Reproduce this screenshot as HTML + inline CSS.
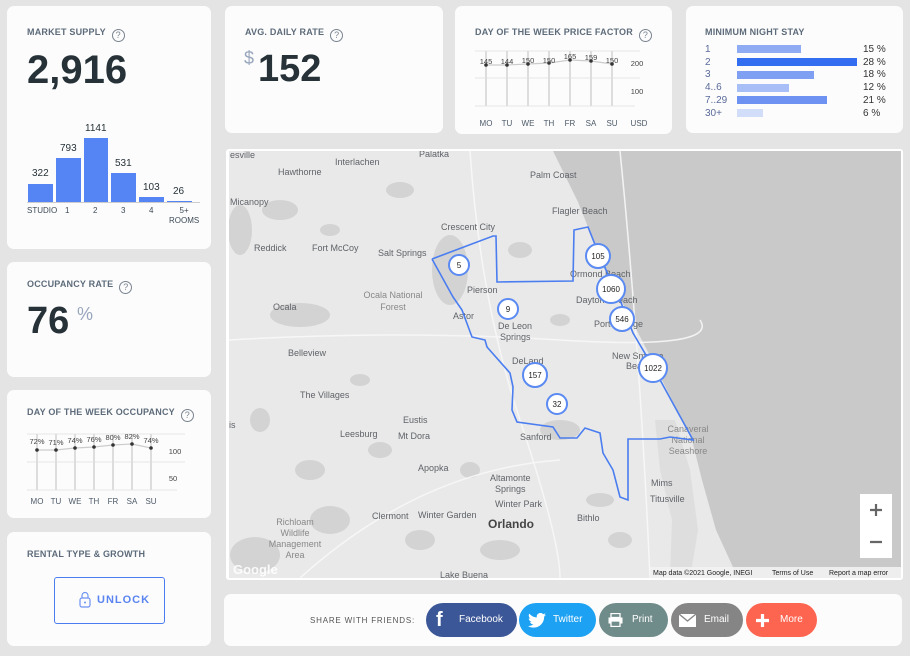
<!DOCTYPE html>
<html><head><meta charset="utf-8"><style>
*{margin:0;padding:0;box-sizing:border-box}
body{width:910px;height:656px;background:#e4e4e4;font-family:"Liberation Sans",sans-serif;position:relative;overflow:hidden;color:#263238}
.card{position:absolute;background:#fcfcfc;border-radius:7px}
.t{position:absolute;font-size:9px;font-weight:bold;color:#5d6b7a;letter-spacing:.2px;white-space:nowrap}
.q{display:inline-block;width:13px;height:13px;border:1.3px solid #7a8490;border-radius:50%;font-size:9px;text-align:center;line-height:11px;color:#7a8490;margin-left:6px;vertical-align:-3px;font-weight:normal}
.ab{position:absolute;white-space:nowrap}
.bar{position:absolute;background:#5585f4}
.btn{position:absolute;top:603px;height:34px;border-radius:17px;color:#fff;font-size:10px}
.btn span{position:absolute;top:11px}
</style></head><body>

<!-- Market supply -->
<div class="card" style="left:7px;top:6px;width:204px;height:243px">
<div class="t" style="left:20px;top:21px">MARKET SUPPLY<span class="q">?</span></div>
<div class="ab" style="left:20px;top:42px;font-size:40px;font-weight:bold;color:#263238">2,916</div>
<div class="bar" style="left:21px;top:178px;width:25px;height:18px"></div>
<div class="bar" style="left:49px;top:152px;width:25px;height:44px"></div>
<div class="bar" style="left:77px;top:132px;width:24px;height:64px"></div>
<div class="bar" style="left:104px;top:167px;width:25px;height:29px"></div>
<div class="bar" style="left:132px;top:191px;width:25px;height:5px"></div>
<div class="bar" style="left:160px;top:195px;width:25px;height:1.5px"></div>
<div class="ab" style="left:20px;top:196px;width:173px;height:1px;background:#ccc"></div>
<div class="ab" style="font-size:10px;left:25px;top:162px">322</div>
<div class="ab" style="font-size:10px;left:53px;top:137px">793</div>
<div class="ab" style="font-size:10px;left:78px;top:117px">1141</div>
<div class="ab" style="font-size:10px;left:108px;top:152px">531</div>
<div class="ab" style="font-size:10px;left:136px;top:176px">103</div>
<div class="ab" style="font-size:10px;left:166px;top:180px">26</div>
<div class="ab" style="font-size:8px;color:#3d4a57;left:20px;top:200px">STUDIO</div>
<div class="ab" style="font-size:8px;color:#3d4a57;left:58px;top:200px">1</div>
<div class="ab" style="font-size:8px;color:#3d4a57;left:86px;top:200px">2</div>
<div class="ab" style="font-size:8px;color:#3d4a57;left:114px;top:200px">3</div>
<div class="ab" style="font-size:8px;color:#3d4a57;left:142px;top:200px">4</div>
<div class="ab" style="font-size:8px;color:#3d4a57;left:162px;top:200px;text-align:center;line-height:10px">5+<br>ROOMS</div>
</div>

<!-- ADR -->
<div class="card" style="left:225px;top:6px;width:218px;height:127px">
<div class="t" style="left:20px;top:21px">AVG. DAILY RATE<span class="q">?</span></div>
<div class="ab" style="left:19px;top:42px;font-size:18px;color:#98a6bd">$</div>
<div class="ab" style="left:33px;top:42px;font-size:38px;font-weight:bold">152</div>
</div>

<!-- Price factor -->
<div class="card" style="left:455px;top:6px;width:217px;height:128px">
<div class="t" style="left:20px;top:21px">DAY OF THE WEEK PRICE FACTOR<span class="q">?</span></div>
<svg class="ab" style="left:0;top:0" width="217" height="128">
<g stroke="#e6e6e6" stroke-width="1"><line x1="20" y1="45" x2="185" y2="45"/><line x1="20" y1="72" x2="185" y2="72"/><line x1="20" y1="100" x2="180" y2="100"/></g>
<g stroke="#ddd" stroke-width="2"><line x1="31" y1="45" x2="31" y2="100"/><line x1="52" y1="45" x2="52" y2="100"/><line x1="73" y1="45" x2="73" y2="100"/><line x1="94" y1="45" x2="94" y2="100"/><line x1="115" y1="45" x2="115" y2="100"/><line x1="136" y1="45" x2="136" y2="100"/><line x1="157" y1="45" x2="157" y2="100"/></g>
<polyline points="31,59 52,59 73,58 94,57 115,54 136,55 157,58" fill="none" stroke="#ccc" stroke-width="1.2"/>
<g fill="#333"><circle cx="31" cy="59" r="1.8"/><circle cx="52" cy="59" r="1.8"/><circle cx="73" cy="58" r="1.8"/><circle cx="94" cy="57" r="1.8"/><circle cx="115" cy="54" r="1.8"/><circle cx="136" cy="55" r="1.8"/><circle cx="157" cy="58" r="1.8"/></g>
<g font-size="7.5" fill="#444" text-anchor="middle" font-family="Liberation Sans"><text x="31" y="58">145</text><text x="52" y="58">144</text><text x="73" y="57">150</text><text x="94" y="57">150</text><text x="115" y="53">165</text><text x="136" y="54">159</text><text x="157" y="57">150</text>
<text x="182" y="60">200</text><text x="182" y="88">100</text></g>
<g font-size="8" fill="#4d5a68" text-anchor="middle" font-family="Liberation Sans"><text x="31" y="120">MO</text><text x="52" y="120">TU</text><text x="73" y="120">WE</text><text x="94" y="120">TH</text><text x="115" y="120">FR</text><text x="136" y="120">SA</text><text x="157" y="120">SU</text><text x="184" y="120">USD</text></g>
</svg>
</div>

<!-- Min night -->
<div class="card" style="left:686px;top:6px;width:217px;height:127px">
<div class="t" style="left:19px;top:21px">MINIMUM NIGHT STAY</div>
<div class="ab" style="left:19px;top:38px;font-size:10px;color:#5a6a9a;line-height:12.7px">1<br>2<br>3<br>4..6<br>7..29<br>30+</div>
<div class="ab" style="left:51px;top:39px;width:64px;height:8px;background:#8eabf4"></div>
<div class="ab" style="left:51px;top:52px;width:120px;height:8px;background:#336df0"></div>
<div class="ab" style="left:51px;top:65px;width:77px;height:8px;background:#7f9ff2"></div>
<div class="ab" style="left:51px;top:78px;width:52px;height:8px;background:#a8bef6"></div>
<div class="ab" style="left:51px;top:90px;width:90px;height:8px;background:#6d92f1"></div>
<div class="ab" style="left:51px;top:103px;width:26px;height:8px;background:#d2ddf9"></div>
<div class="ab" style="left:177px;top:38px;font-size:10px;color:#333;line-height:12.7px">15 %<br>28 %<br>18 %<br>12 %<br>21 %<br>6 %</div>
</div>

<!-- Occupancy -->
<div class="card" style="left:7px;top:262px;width:204px;height:115px">
<div class="t" style="left:20px;top:17px">OCCUPANCY RATE<span class="q">?</span></div>
<div class="ab" style="left:20px;top:38px;font-size:38px;font-weight:bold">76</div>
<div class="ab" style="left:70px;top:42px;font-size:18px;color:#98a6bd">%</div>
</div>

<!-- DOW occ -->
<div class="card" style="left:7px;top:390px;width:204px;height:128px">
<div class="t" style="left:20px;top:17px">DAY OF THE WEEK OCCUPANCY<span class="q">?</span></div>
<svg class="ab" style="left:0;top:0" width="204" height="128">
<g stroke="#e6e6e6"><line x1="20" y1="44" x2="178" y2="44"/><line x1="20" y1="72" x2="178" y2="72"/><line x1="20" y1="100" x2="170" y2="100"/></g>
<g stroke="#ddd" stroke-width="2"><line x1="30" y1="44" x2="30" y2="100"/><line x1="49" y1="44" x2="49" y2="100"/><line x1="68" y1="44" x2="68" y2="100"/><line x1="87" y1="44" x2="87" y2="100"/><line x1="106" y1="44" x2="106" y2="100"/><line x1="125" y1="44" x2="125" y2="100"/><line x1="144" y1="44" x2="144" y2="100"/></g>
<polyline points="30,60 49,60 68,58 87,57 106,55 125,54 144,58" fill="none" stroke="#ccc" stroke-width="1.2"/>
<g fill="#333"><circle cx="30" cy="60" r="1.8"/><circle cx="49" cy="60" r="1.8"/><circle cx="68" cy="58" r="1.8"/><circle cx="87" cy="57" r="1.8"/><circle cx="106" cy="55" r="1.8"/><circle cx="125" cy="54" r="1.8"/><circle cx="144" cy="58" r="1.8"/></g>
<g font-size="7.5" fill="#444" text-anchor="middle" font-family="Liberation Sans"><text x="30" y="54">72%</text><text x="49" y="55">71%</text><text x="68" y="53">74%</text><text x="87" y="52">76%</text><text x="106" y="50">80%</text><text x="125" y="49">82%</text><text x="144" y="53">74%</text>
<text x="168" y="64">100</text><text x="166" y="91">50</text></g>
<g font-size="8" fill="#4d5a68" text-anchor="middle" font-family="Liberation Sans"><text x="30" y="114">MO</text><text x="49" y="114">TU</text><text x="68" y="114">WE</text><text x="87" y="114">TH</text><text x="106" y="114">FR</text><text x="125" y="114">SA</text><text x="144" y="114">SU</text></g>
</svg>
</div>

<!-- Rental -->
<div class="card" style="left:7px;top:532px;width:204px;height:114px">
<div class="t" style="left:20px;top:17px">RENTAL TYPE &amp; GROWTH</div>
<div class="ab" style="left:47px;top:45px;width:111px;height:47px;border:1.3px solid #4a7df0;border-radius:3px"></div>
<svg class="ab" style="left:72px;top:59px" width="12" height="17"><path d="M3 7V4.5a3 3 0 0 1 6 0V7" fill="none" stroke="#6f93f2" stroke-width="1.2"/><rect x="1" y="7" width="10" height="9" rx="2" fill="none" stroke="#6f93f2" stroke-width="1.2"/><circle cx="6" cy="11.5" r="1" fill="#6f93f2"/></svg>
<div class="ab" style="left:90px;top:62px;font-size:11px;font-weight:bold;color:#5a85f0;letter-spacing:1px">UNLOCK</div>
</div>

<!-- Map -->
<div class="ab" style="left:226px;top:149px;width:677px;height:431px;background:#fff;border-radius:3px"></div>
<svg class="ab" style="left:229px;top:151px" width="672" height="427" viewBox="229 151 672 427">
<rect x="229" y="151" width="672" height="427" fill="#e9e9e9"/>
<polygon points="553,151 901,151 901,578 738,578 716,530 702,480 692,440 672,400 648,352 622,302 598,252 578,202" fill="#c9c9c9"/>
<polygon points="655,420 675,420 690,470 698,530 690,578 670,578 672,520 660,470" fill="#dedede"/>
<g fill="#d3d3d3">
<ellipse cx="450" cy="270" rx="18" ry="35"/><ellipse cx="300" cy="315" rx="30" ry="12"/><ellipse cx="280" cy="210" rx="18" ry="10"/><ellipse cx="560" cy="430" rx="20" ry="10"/><ellipse cx="255" cy="555" rx="25" ry="18"/><ellipse cx="420" cy="540" rx="15" ry="10"/><ellipse cx="330" cy="520" rx="20" ry="14"/><ellipse cx="470" cy="470" rx="10" ry="8"/><ellipse cx="240" cy="230" rx="12" ry="25"/><ellipse cx="380" cy="450" rx="12" ry="8"/><ellipse cx="310" cy="470" rx="15" ry="10"/>
<ellipse cx="330" cy="230" rx="10" ry="6"/><ellipse cx="520" cy="250" rx="12" ry="8"/><ellipse cx="560" cy="320" rx="10" ry="6"/><ellipse cx="600" cy="500" rx="14" ry="7"/><ellipse cx="260" cy="420" rx="10" ry="12"/><ellipse cx="360" cy="380" rx="10" ry="6"/><ellipse cx="400" cy="190" rx="14" ry="8"/><ellipse cx="620" cy="540" rx="12" ry="8"/><ellipse cx="500" cy="550" rx="20" ry="10"/>
</g>
<g fill="none" stroke="#f8f8f8" stroke-width="1.5" opacity=".9"><path d="M229 340 Q400 330 560 340 T700 320"/><path d="M470 151 Q480 300 520 420 T560 578"/><path d="M620 151 Q640 350 650 578"/><path d="M300 578 Q420 470 560 460"/></g>
<g font-size="9" fill="#5f6368" font-family="Liberation Sans">
<text x="230" y="158">esville</text><text x="335" y="165">Interlachen</text><text x="419" y="157">Palatka</text><text x="278" y="175">Hawthorne</text><text x="530" y="178">Palm Coast</text><text x="230" y="205">Micanopy</text><text x="552" y="214">Flagler Beach</text><text x="441" y="230">Crescent City</text><text x="254" y="251">Reddick</text><text x="312" y="251">Fort McCoy</text><text x="378" y="256">Salt Springs</text><text x="467" y="293">Pierson</text><text x="570" y="277">Ormond Beach</text><text x="576" y="303">Daytona Beach</text><text x="273" y="310">Ocala</text><text x="453" y="319">Astor</text><text x="498" y="329">De Leon</text><text x="500" y="340">Springs</text><text x="594" y="327">Port Orange</text><text x="288" y="356">Belleview</text><text x="512" y="364">DeLand</text><text x="612" y="359">New Smyrna</text><text x="626" y="369">Beach</text><text x="300" y="398">The Villages</text><text x="403" y="423">Eustis</text><text x="340" y="437">Leesburg</text><text x="398" y="439">Mt Dora</text><text x="229" y="428">is</text><text x="520" y="440">Sanford</text><text x="418" y="471">Apopka</text><text x="490" y="481">Altamonte</text><text x="495" y="492">Springs</text><text x="372" y="519">Clermont</text><text x="418" y="518">Winter Garden</text><text x="495" y="507">Winter Park</text><text x="577" y="521">Bithlo</text><text x="651" y="486">Mims</text><text x="650" y="502">Titusville</text><text x="440" y="578">Lake Buena</text>
<text x="488" y="528" font-size="12" font-weight="bold" fill="#444">Orlando</text>
</g>
<g font-size="9" fill="#888" font-family="Liberation Sans" text-anchor="middle"><text x="393" y="298">Ocala National</text><text x="393" y="310">Forest</text><text x="295" y="525">Richloam</text><text x="295" y="536">Wildlife</text><text x="295" y="547">Management</text><text x="295" y="558">Area</text><text x="688" y="432">Canaveral</text><text x="688" y="443">National</text><text x="688" y="454">Seashore</text></g>
<polyline fill="none" stroke="#4a7df0" stroke-width="1.6" points="432,259 493,236 496,236 497,282 573,281 574,230 588,227 600,257 620,300 633,333 653,367 693,440 670,437 660,439 628,439 628,500 620,497 613,470 603,453 600,433 585,428 577,438 560,438 553,427 517,422 512,410 513,387 510,373 487,347 485,340 472,337 462,310 453,297 432,259"/>
<g fill="#fff" stroke="#5a8af2" stroke-width="2"><circle cx="459" cy="265" r="10"/><circle cx="508" cy="309" r="10"/><circle cx="598" cy="256" r="12"/><circle cx="611" cy="289" r="14"/><circle cx="622" cy="319" r="12"/><circle cx="535" cy="375" r="12"/><circle cx="557" cy="404" r="10"/><circle cx="653" cy="368" r="14"/></g>
<g font-size="8" fill="#222" font-family="Liberation Sans" text-anchor="middle"><text x="459" y="268">5</text><text x="508" y="312">9</text><text x="598" y="259">105</text><text x="611" y="292">1060</text><text x="622" y="322">546</text><text x="535" y="378">157</text><text x="557" y="407">32</text><text x="653" y="371">1022</text></g>
<rect x="860" y="494" width="32" height="64" fill="#fff"/>
<path d="M870 510h12M876 504v12M870 542h12" stroke="#666" stroke-width="2.2"/>
<rect x="650" y="567" width="251" height="11" fill="#f2f2f2" opacity=".9"/>
<g font-size="7" fill="#222" font-family="Liberation Sans"><text x="653" y="575">Map data ©2021 Google, INEGI</text><text x="772" y="575">Terms of Use</text><text x="829" y="575">Report a map error</text></g>
<text x="233" y="574" font-size="13" fill="#fff" font-family="Liberation Sans" font-weight="bold" opacity=".9">Google</text>
</svg>

<!-- Share -->
<div class="card" style="left:224px;top:594px;width:678px;height:52px">
<div class="ab" style="left:86px;top:22px;font-size:8px;color:#555;letter-spacing:.8px">SHARE WITH FRIENDS:</div>
</div>
<div class="btn" style="left:426px;width:91px;background:#3b5797"><span style="left:10px;top:6px;font-size:20px;font-weight:bold">f</span><span style="left:33px">Facebook</span></div>
<div class="btn" style="left:519px;width:77px;background:#1da1f2"><svg style="position:absolute;left:9px;top:10px" width="18" height="15" viewBox="0 0 24 20"><path d="M24 2.4a10 10 0 0 1-2.8.8A5 5 0 0 0 23.3.4a10 10 0 0 1-3.1 1.2A4.9 4.9 0 0 0 11.8 6 14 14 0 0 1 1.7.9a4.9 4.9 0 0 0 1.5 6.6A4.9 4.9 0 0 1 1 6.9a4.9 4.9 0 0 0 3.9 4.8 5 5 0 0 1-2.2.1 4.9 4.9 0 0 0 4.6 3.4A9.9 9.9 0 0 1 0 17.3 14 14 0 0 0 7.5 19.5c9 0 14-7.5 14-14v-.6A10 10 0 0 0 24 2.4z" fill="#fff"/></svg><span style="left:34px">Twitter</span></div>
<div class="btn" style="left:599px;width:69px;background:#708c8a"><svg style="position:absolute;left:9px;top:10px" width="15" height="14"><rect x="3" y="0.5" width="9" height="4" fill="none" stroke="#fff" stroke-width="1.3"/><rect x="0.5" y="4.5" width="14" height="6" fill="#fff"/><rect x="3" y="8" width="9" height="5.5" fill="#708c8a" stroke="#fff" stroke-width="1.3"/></svg><span style="left:33px">Print</span></div>
<div class="btn" style="left:671px;width:72px;background:#858585"><svg style="position:absolute;left:8px;top:11px" width="17" height="13"><rect x="0" y="0" width="17" height="13" fill="#fff"/><path d="M0 0l8.5 7L17 0" fill="none" stroke="#858585" stroke-width="1.3"/></svg><span style="left:33px">Email</span></div>
<div class="btn" style="left:746px;width:71px;background:#fe6550"><svg style="position:absolute;left:10px;top:11px" width="13" height="13"><path d="M6.5 0v13M0 6.5h13" stroke="#fff" stroke-width="3.2"/></svg><span style="left:34px">More</span></div>
</body></html>
